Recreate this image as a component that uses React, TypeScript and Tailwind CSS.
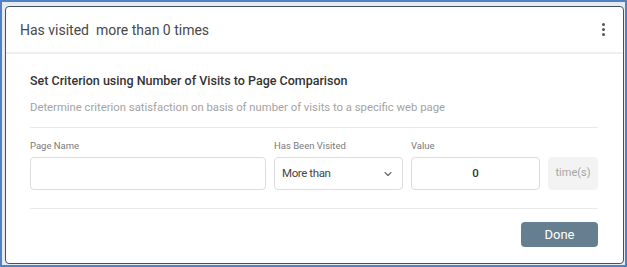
import { ChevronDown } from "lucide-react";

const App = () => {
  return (
    <div className="w-[627px] h-[267px] border-2 border-[#4f82c4] bg-[#e6ebf2] pt-[4px] pl-[3px] pr-[1px] pb-[1px] font-['Roboto',sans-serif]">
      <div className="h-full rounded-[4px] border border-[#455263] bg-white flex flex-col">
        {/* HEADER */}
        <div className="h-[47px] shrink-0 flex items-center justify-between pl-[14px] pr-[18px] border-b-2 border-[#efefef]">
          <span className="mt-[2px] text-[14px] text-[#484848] whitespace-pre">Has visited  more than 0 times</span>
          <div className="flex flex-col gap-[2px] items-center mt-[-1px]">
            <span className="w-[3px] h-[3px] rounded-full bg-[#555]" />
            <span className="w-[3px] h-[3px] rounded-full bg-[#555]" />
            <span className="w-[3px] h-[3px] rounded-full bg-[#555]" />
          </div>
        </div>

        {/* BODY */}
        <div className="flex-1 pl-[24px] pr-[25px] pt-[19px] flex flex-col">
          <h3 className="text-[12.5px] leading-[16px] font-medium text-[#333]">
            Set Criterion using Number of Visits to Page Comparison
          </h3>
          <p className="mt-[11px] text-[11.3px] leading-[16px] text-[#a3a3a3]">
            Determine criterion satisfaction on basis of number of visits to a specific web page
          </p>
          <div className="mt-[11px] h-px bg-[#e8e8e8]" />

          <div className="mt-[12px] flex gap-[8px]">
            <div className="w-[236px] flex flex-col">
              <label className="text-[9.5px] leading-[12px] text-[#7a7a7a]">Page Name</label>
              <input
                type="text"
                className="mt-[5px] h-[33px] w-full rounded-[4px] border border-[#dcdcdc] px-2 outline-none"
              />
            </div>
            <div className="w-[129px] flex flex-col">
              <label className="text-[9.5px] leading-[12px] text-[#7a7a7a]">Has Been Visited</label>
              <div className="mt-[5px] h-[33px] rounded-[4px] border border-[#dcdcdc] pl-[7px] pr-[8px] flex items-center justify-between">
                <span className="text-[11.5px] tracking-[-0.4px] text-[#444]">More than</span>
                <ChevronDown size={12} strokeWidth={2.2} className="text-[#666]" />
              </div>
            </div>
            <div className="w-[129px] flex flex-col">
              <label className="text-[9.5px] leading-[12px] text-[#7a7a7a]">Value</label>
              <div className="mt-[5px] h-[33px] rounded-[4px] border border-[#dcdcdc] flex items-center justify-center">
                <span className="text-[11.5px] font-medium text-[#333]">0</span>
              </div>
            </div>
            <div className="w-[50px] flex flex-col">
              <div className="h-[12px]" />
              <div className="mt-[5px] h-[33px] rounded-[4px] bg-[#f3f3f3] flex items-center justify-center">
                <span className="text-[11px] text-[#a5a5a5]">time(s)</span>
              </div>
            </div>
          </div>

          <div className="mt-[18px] h-px bg-[#e8e8e8]" />

          <div className="mt-[13px] flex justify-end">
            <button className="w-[77px] h-[25px] rounded-[4px] bg-[#657f90] text-white text-[13px]">
              Done
            </button>
          </div>
        </div>
      </div>
    </div>
  );
};

export default App;
